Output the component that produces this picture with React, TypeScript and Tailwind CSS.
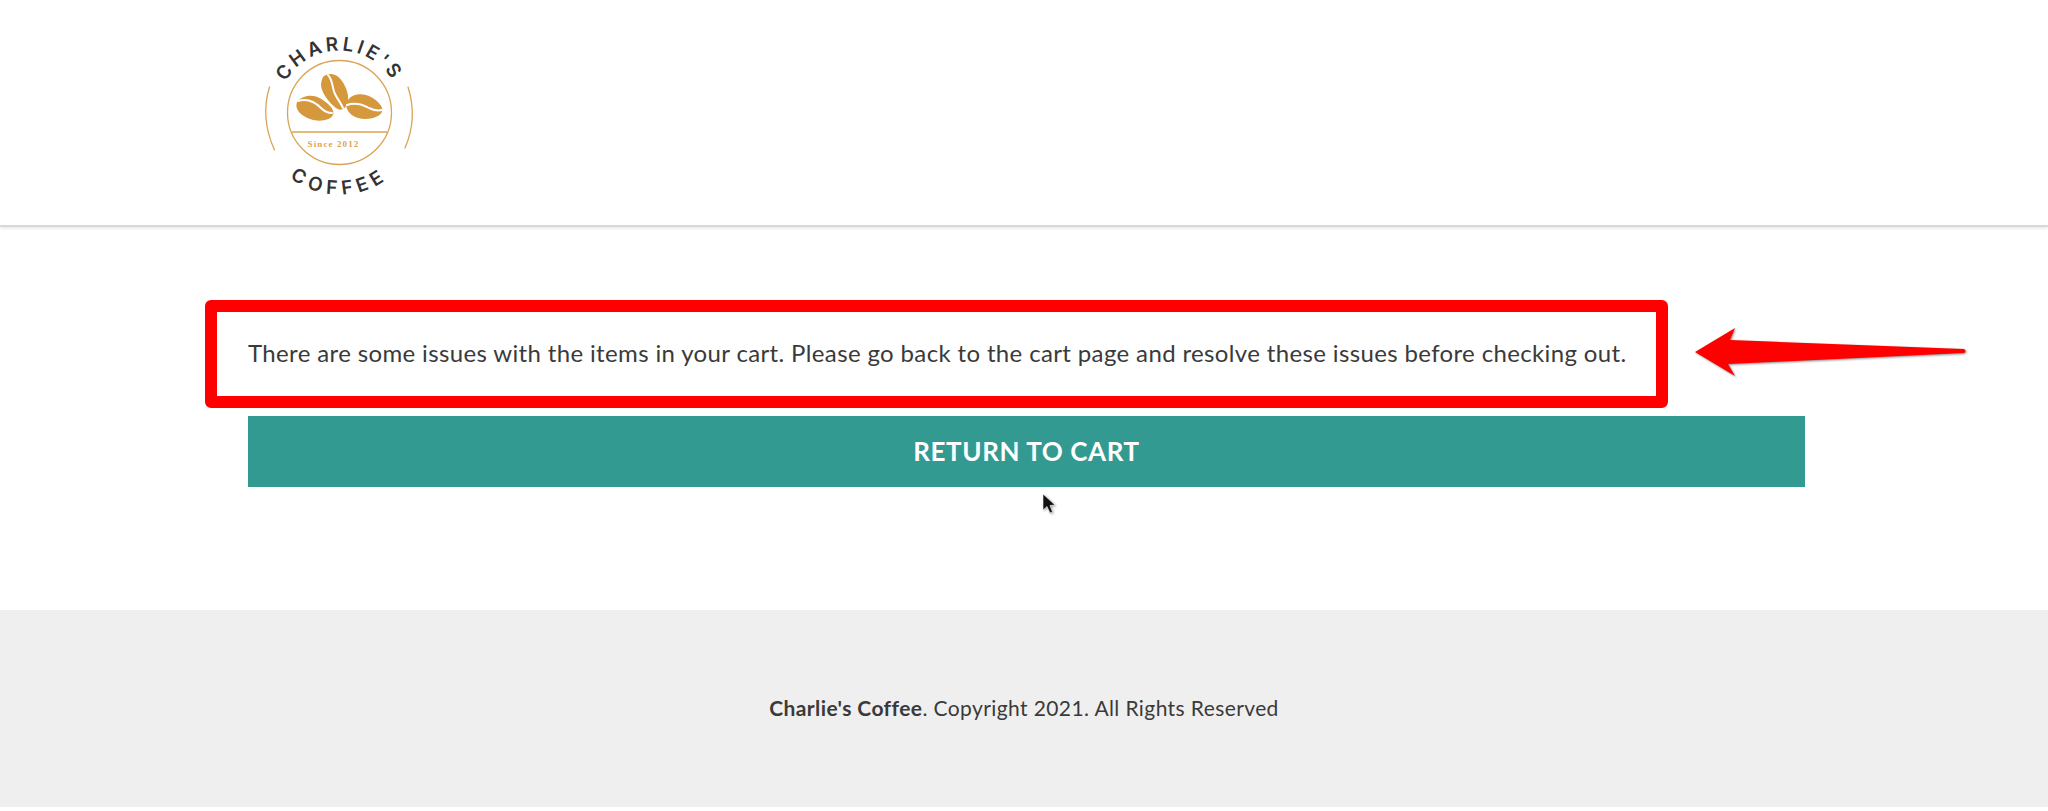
const Logo = () => (
  <svg width="200" height="190" viewBox="0 0 200 190" className="block">
    <defs>
      <path id="logo-top" d="M 37.5 92.5 A 62 62 0 0 1 161.5 92.5" />
      <path id="logo-bottom" d="M 17.5 92.5 A 82 82 0 0 0 181.5 92.5" />
    </defs>
    <g fill="none" stroke="#dba455" strokeWidth="1.3">
      <circle cx="99.5" cy="92.5" r="52" />
      <path d="M 52 112 H 147" />
      <path d="M 29.5 67 Q 20 98 34.5 130" strokeLinecap="round" />
      <path d="M 168 67 Q 178 98 165 128" strokeLinecap="round" />
    </g>
    <text fill="#333333" fontSize="19" fontWeight="600" letterSpacing="3.4" textAnchor="middle" fontFamily="Inter, sans-serif">
      <textPath href="#logo-top" startOffset="50%">CHARLIE'S</textPath>
    </text>
    <text fill="#333333" fontSize="19" fontWeight="600" letterSpacing="5.4" textAnchor="middle" fontFamily="Inter, sans-serif">
      <textPath href="#logo-bottom" startOffset="50%">COFFEE</textPath>
    </text>
    <text x="93.5" y="127" fill="#dba455" fontSize="9" fontWeight="700" letterSpacing="1.1" textAnchor="middle" fontFamily="'Liberation Serif', serif">
      Since 2012
    </text>
    {/* beans */}
    <g fill="#d6983c">
      <path d="M 57 82 C 62 75 74 73 83 80 C 90 85 95 90 93 95 C 90 101 78 102 70 99 C 62 96 54 90 57 82 Z" />
      <path d="M 83 57 C 88 52 97 53 102 61 C 107 68 110 78 107 84 C 105 90 100 91 96 88 C 89 83 81 72 81 65 C 81 62 82 59 83 57 Z" />
      <path d="M 107 82 C 110 74 122 72 131 77 C 138 81 144 87 142 92 C 138 99 126 100 118 98 C 111 96 104 89 107 82 Z" />
    </g>
    <g fill="none" stroke="#ffffff" strokeWidth="2" strokeLinecap="round">
      <path d="M 58 81 C 68 78 76 83 81 88 C 85 92 89 93 92 93" />
      <path d="M 88 55 C 93 60 92 68 95 74 C 98 80 101 83 103 88" />
      <path d="M 107 85 C 115 82 122 84 129 88 C 133 90 138 91 142 90" />
    </g>
  </svg>
);

const RedArrow = () => (
  <svg width="290" height="60" viewBox="0 0 290 60" className="block overflow-visible">
    <path
      d="M 2 32 L 42 8 L 37 20 L 271 29 Q 274 31 271 33 L 35 44 L 42 56 Z"
      fill="#ff0000"
      style={{ filter: "drop-shadow(1px 1px 1px rgba(0,0,0,0.45))" }}
    />
  </svg>
);

export default function App() {
  return (
    <div className="relative w-full min-h-[811px] flex flex-col bg-white text-[#3a3a3a] font-['Lato','Open_Sans',sans-serif]">
      <header className="h-[227px] border-b-2 border-[#d9d9d9] pl-[240px] pt-[20px] shadow-[0_1px_3px_rgba(0,0,0,0.12)]">
        <Logo />
      </header>
      <main className="h-[383px] px-[248px] pt-[85px]">
        <p className="w-[1557px] h-[104px] pt-[27px] text-[24px] leading-[28px] tracking-[0.36px] whitespace-nowrap">
          There are some issues with the items in your cart. Please go back to the cart page and resolve these issues before checking out.
        </p>
        <button className="w-[1557px] h-[71px] pb-[1px] bg-[#329a91] text-white text-[26px] font-bold tracking-[0.6px] uppercase">
          Return to cart
        </button>
      </main>
      <footer className="h-[197px] bg-[#efefef] flex items-start justify-center pt-[84px] text-[21px] leading-[28px] tracking-[0.4px]">
        <p>
          <b className="font-bold">Charlie's Coffee</b>. Copyright 2021. All Rights Reserved
        </p>
      </footer>

      {/* annotation added over the page */}
      <div className="absolute left-[205px] top-[300px] w-[1463px] h-[108px] border-[12px] border-[#ff0000] rounded-[6px]" />
      <div className="absolute left-[1693px] top-[320px]">
        <RedArrow />
      </div>
      {/* mouse pointer */}
      <svg className="absolute left-[1042px] top-[493px] drop-shadow-[1px_1px_1px_rgba(0,0,0,0.35)]" width="14" height="24" viewBox="0 0 14 24">
        <path d="M 1 1 L 1 17 L 5 13.5 L 8 20 L 10.5 19 L 8 12.5 L 13 12 Z" fill="#111111" stroke="#ffffff" strokeWidth="0.6" />
      </svg>
    </div>
  );
}
